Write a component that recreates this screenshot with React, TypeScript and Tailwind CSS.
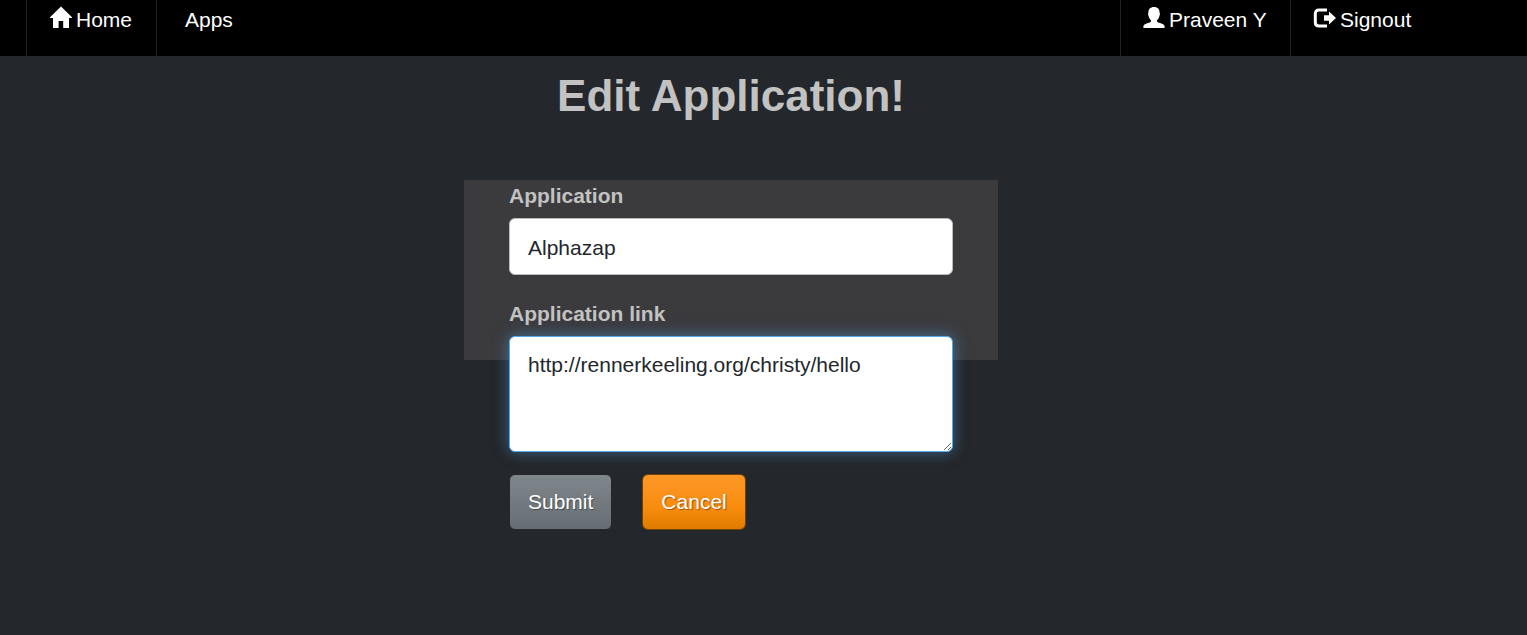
import type { ReactNode } from 'react';

type NavLinkProps = { children: ReactNode; className?: string };

function NavLink({ children, className = '' }: NavLinkProps) {
  return (
    <a
      href="#"
      className={`flex items-start gap-1 border-l border-[#222222] pt-1 leading-8 text-white ${className}`}
    >
      {children}
    </a>
  );
}

function HomeIcon() {
  return (
    <svg viewBox="0 0 22 22" className="mt-0.5 size-[22px]" fill="currentColor" aria-hidden="true">
      <path d="M11 0.5 L22 11.2 V12 H19 V22 H13.2 V15 H8.6 V22 H3 V12 H0 V11.2 Z" />
    </svg>
  );
}

function UserIcon() {
  return (
    <svg viewBox="0 0 22 22" className="mt-0.5 size-[22px]" fill="currentColor" aria-hidden="true">
      <path d="M11 1 C14.8 1 16.6 3.2 16.6 6.6 C17 7.6 17 8.8 16.5 9.7 C16 12 15 13.2 14 14.2 C13.9 15.8 14.6 16.2 16.2 16.8 C19.5 17.9 21.6 18.8 21.6 20.3 V22 H0.4 V20.3 C0.4 18.8 2.5 17.9 5.8 16.8 C7.4 16.2 8.1 15.8 8 14.2 C7 13.2 6 12 5.5 9.7 C5 8.8 5 7.6 5.4 6.6 C5.4 3.2 7.2 1 11 1 Z" />
    </svg>
  );
}

function SignoutIcon() {
  return (
    <svg viewBox="0 0 23 22" className="mt-0.5 h-[22px] w-[23px]" aria-hidden="true">
      <path
        d="M14 4 H6 C3.5 4 2.3 5.3 2.3 7.7 V16.3 C2.3 18.7 3.5 20 6 20 H14"
        fill="none"
        stroke="currentColor"
        strokeWidth="3"
      />
      <path d="M11 9.3 H16 V5.5 L23 12 L16 18.5 V14.7 H11 Z" fill="currentColor" />
    </svg>
  );
}

export default function App() {
  return (
    <div className="min-h-screen bg-[#24272b] font-['Liberation_Sans',Arial,sans-serif] text-[21px] text-[#c2c2c2]">
      <nav className="flex h-14 justify-between bg-black">
        <div className="flex pl-[26px]">
          <NavLink className="w-[130px] pl-[23px]">
            <HomeIcon />
            Home
          </NavLink>
          <NavLink className="pl-7">Apps</NavLink>
        </div>
        <div className="flex">
          <NavLink className="w-[170px] pl-[22px]">
            <UserIcon />
            Praveen Y
          </NavLink>
          <NavLink className="w-[237px] pl-[22px]">
            <SignoutIcon />
            Signout
          </NavLink>
        </div>
      </nav>

      <main className="flex flex-col items-center pr-[65px]">
        <h1 className="pt-3 text-[44px] leading-[56px] font-bold text-[#c2c2c2]">Edit Application!</h1>
        <form className="mt-14 w-full max-w-[534px]" onSubmit={(event) => event.preventDefault()}>
          <div className="h-[180px] bg-[#3b3b3e] px-[45px]">
            <label htmlFor="application" className="block leading-8 font-bold">
              Application
            </label>
            <input
              id="application"
              type="text"
              defaultValue="Alphazap"
              className="mt-1.5 block h-[57px] w-full rounded-md border border-[#bbbbbb] bg-white px-[18px] pt-0.5 text-[#24272b] outline-none"
            />
            <label htmlFor="application-link" className="mt-[23px] block leading-8 font-bold">
              Application link
            </label>
            <textarea
              id="application-link"
              defaultValue="http://rennerkeeling.org/christy/hello"
              className="mt-1.5 block h-[116px] w-full rounded-md border border-[#52a8ec] bg-white px-[18px] py-3 leading-8 text-[#24272b] shadow-[0_0_15px_rgba(82,168,236,0.5)] outline-none"
            />
          </div>
          <div className="flex gap-[30px] px-[45px] pt-[114px]">
            <button
              type="submit"
              className="h-14 rounded-md border border-[#24272b] bg-linear-to-b from-[#7f868c] to-[#666e73] px-[18px] text-white text-shadow-[1px_1px_1px_rgba(0,0,0,0.4)]"
            >
              Submit
            </button>
            <button
              type="button"
              className="h-14 rounded-md border border-[#714209] bg-linear-to-b from-[#fc9826] via-[#f88c0c] via-60% to-[#df7b00] px-[18px] text-white text-shadow-[1px_1px_1px_rgba(0,0,0,0.4)]"
            >
              Cancel
            </button>
          </div>
        </form>
      </main>
    </div>
  );
}
